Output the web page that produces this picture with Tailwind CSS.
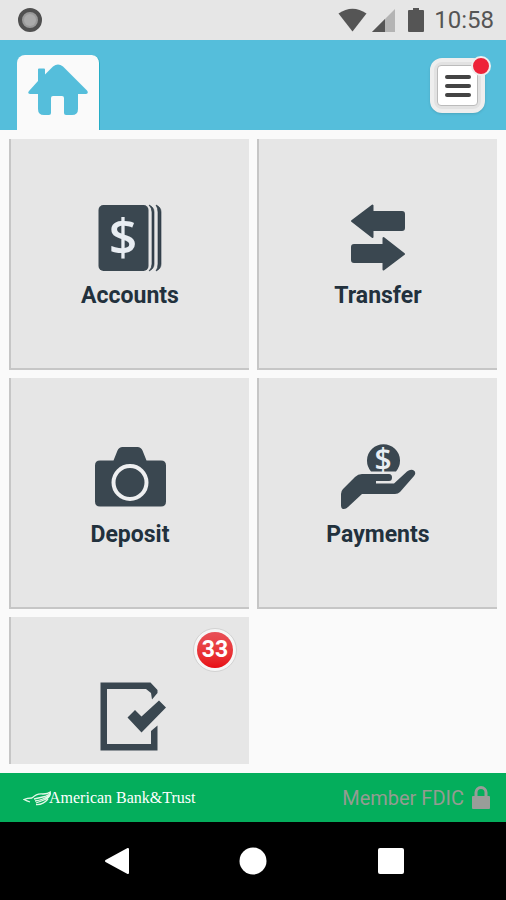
<!DOCTYPE html>
<html lang="en">
<head>
    <meta charset="UTF-8">
    <meta name="viewport" content="width=device-width, initial-scale=1.0">
    <title>American Bank &amp; Trust</title>
    <script src="https://cdn.jsdelivr.net/npm/@tailwindcss/browser@4"></script>
</head>
<body class="flex h-screen flex-col overflow-hidden bg-[#fafafa] font-[Roboto,sans-serif]">
    <!-- Status bar -->
    <div class="flex h-10 shrink-0 items-center bg-[#e6e6e6] pr-3 pl-[18px] text-[#555]">
        <svg class="size-6" viewBox="0 0 24 24">
            <circle cx="12" cy="12" r="10" fill="#999" stroke="#505050" stroke-width="4"/>
            <circle cx="12" cy="12" r="6" fill="#aaa"/>
        </svg>
        <div class="ml-auto flex items-center">
            <svg class="h-6 w-[30px]" viewBox="0 0 30 24" fill="currentColor">
                <path d="M0.500 5.500Q14.500-4 28.500 5.500L14.500 23.500Z"/>
            </svg>
            <svg class="ml-1 h-6 w-6" viewBox="0 0 24 24">
                <path d="M23 1V24H0Z" fill="#b4b4b4"/>
                <path d="M13 11V24H0Z" fill="#555"/>
            </svg>
            <svg class="ml-3 h-6 w-4" viewBox="0 0 16 24" fill="currentColor">
                <path d="M5 0h6v2h4q1 0 1 1v20q0 1-1 1H1q-1 0-1-1V3q0-1 1-1h4z"/>
            </svg>
            <span class="ml-2.5 text-2xl leading-10">10:58</span>
        </div>
    </div>

    <!-- Header -->
    <header class="flex h-[90px] shrink-0 items-end justify-between bg-[#55bedb] pr-[21px] pl-[17px]">
        <a href="#" aria-label="Home" class="flex h-[75px] w-[83px] justify-center rounded-t-lg border-r border-[#25adc6] bg-[#fafafa] pt-2">
            <svg class="h-[54px] w-[60px]" viewBox="0 0 60 54" fill="#55bedb">
                <path d="M10 6.500q0-1 1-1h5q1 0 1 1v5l8-8q5-4 10 0l24 24q2 3-1 3.500h-8V46q0 6-6 6h-6q-2 0-2-2V35q0-2-2-2h-9q-2 0-2 2v15q0 2-2 2h-5q-6 0-6-6V31H2q-3-.500-1-3l9-10z"/>
            </svg>
        </a>
        <button type="button" aria-label="Menu" class="relative mb-[17px] size-[55px] rounded-xl border-4 border-[#eee] bg-[#e2e2e2] p-[3px] shadow-sm">
            <span class="flex size-full flex-col items-center justify-center gap-[5px] rounded-sm border border-[#bbb] bg-white">
                <span class="h-1 w-[26px] rounded-full bg-[#444]"></span>
                <span class="h-1 w-[26px] rounded-full bg-[#444]"></span>
                <span class="h-1 w-[26px] rounded-full bg-[#444]"></span>
            </span>
            <span class="absolute -top-1.5 -right-2.5 size-5 rounded-full border-2 border-[#eee] bg-[#ee2238]"></span>
        </button>
    </header>

    <!-- Tiles -->
    <main class="min-h-0 flex-1 p-[9px]">
        <div class="grid h-full auto-rows-[231px] grid-cols-2 gap-2 overflow-hidden text-[23px] leading-7 font-bold text-[#22313d]">
            <a href="#" class="flex flex-col items-center justify-center gap-2.5 border-b-2 border-l-2 border-[#c6c6c6] bg-[#e6e6e6] pt-0.5">
                <svg class="h-[72px] w-[76px]" viewBox="0 0 76 72" fill="#3a4750">
                    <rect x="6.500" y="5" width="50" height="66" rx="5"/>
                    <path d="M57 5q5 2 5 7v52q0 5-5 7q3-3 3-7V12q0-4-3-7zM64 5q5 2 5 7v52q0 5-5 7q2-3 2-7V12q0-4-2-7z" stroke="#22313d" stroke-width=".6"/>
                    <text x="31" y="55" text-anchor="middle" font-family="Open Sans" font-size="50" font-weight="600" fill="#e8edf2">$</text>
                </svg>
                Accounts
            </a>
            <a href="#" class="flex flex-col items-center justify-center gap-2.5 border-b-2 border-l-2 border-[#c6c6c6] bg-[#e6e6e6] pt-0.5">
                <svg class="h-[72px] w-[76px]" viewBox="0 0 76 72" fill="#3a4750" stroke="#3a4750" stroke-width="2" stroke-linejoin="round">
                    <path d="M12 21L32.500 5.500V12H62q2 0 2 2V28q0 2-2 2H32.500V37Z"/>
                    <path d="M64 54L43.500 38V45H14q-2 0-2 2V60q0 2 2 2H43.500V69.500Z"/>
                </svg>
                Transfer
            </a>
            <a href="#" class="flex flex-col items-center justify-center gap-2.5 border-b-2 border-l-2 border-[#c6c6c6] bg-[#e6e6e6] pt-0.5">
                <svg class="h-[72px] w-[76px]" viewBox="0 0 76 72" fill="#3a4750">
                    <path d="M8 21.500h13.500l4-10q1.500-3.500 5-3.500h15q3.500 0 5 3.500l4 10H69q5 0 5 5v36q0 5-5 5H8q-5 0-5-5v-36q0-5 5-5z"/>
                    <circle cx="38" cy="43.500" r="16.500" fill="none" stroke="#eeeff0" stroke-width="4"/>
                </svg>
                Deposit
            </a>
            <a href="#" class="flex flex-col items-center justify-center gap-2.5 border-b-2 border-l-2 border-[#c6c6c6] bg-[#e6e6e6] pt-0.5">
                <svg class="h-[72px] w-[76px]" viewBox="0 0 76 72" fill="#3a4750">
                    <path d="M31 32.500A16.500 16.500 0 1 1 56 32.500z"/>
                    <text x="43" y="31" text-anchor="middle" font-family="Open Sans" font-size="30" font-weight="600" fill="#e8edf2">$</text>
                    <path d="M1 55q0-3 2-5L15 38q3-3 7-3H49q3 0 3 3.500T49 42H36v2.500H54L67 32.500q3-2.500 6-1.500 4 2 1 6L60 53q-2 2-5 2H22L8 68q-3 3-6 1.500-1-1-1-3z"/>
                </svg>
                Payments
            </a>
            <a href="#" aria-label="Approvals" class="relative flex flex-col items-center justify-center gap-2.5 border-b-2 border-l-2 border-[#c6c6c6] bg-[#e6e6e6] pt-0.5">
                <svg class="h-[72px] w-[76px] overflow-visible" viewBox="0 0 76 72" fill="#3a4750">
                    <path d="M8.500 4.500H58.500L65.500 12V15L60 21.500 59 15 54 11H15V66H59V53L65.500 47.500V72.500H8.500Z"/>
                    <path d="M35.500 39.500L43 32 49.500 38.500 67 22.500 74 29.500 49.500 54.500Z"/>
                </svg>
                <span class="h-7"></span>
                <span class="absolute top-[11px] right-3 flex size-11 items-center justify-center rounded-full border border-[#d2d2d2] bg-[#f6f6f6] p-[3px]">
                    <span class="flex size-full items-center justify-center rounded-full bg-linear-to-b from-[#e85058] to-[#e80812] text-white">33</span>
                </span>
            </a>
        </div>
    </main>

    <!-- Footer -->
    <footer class="flex h-[49px] shrink-0 items-center justify-between bg-[#04ae5c] pr-4 pl-[23px]">
        <div class="flex items-center text-white">
            <svg class="h-4 w-7" viewBox="0 0 28 16" fill="none" stroke="#e4f8e8" stroke-width="1.300">
                <path d="M9 8Q4 8 1 9.500Q4 11 7 12"/>
                <path d="M9 8Q14 3 20 4Q25 4 29 1Q27 5 22 6.500L11 9"/>
                <path d="M12 11Q20 10 27 5Q26 8 21 10L13 13"/>
                <path d="M13 14.500Q20 15 25 9"/>
            </svg>
            <span class="-ml-0.5 font-['Liberation_Serif',serif] text-base">American Bank&amp;Trust</span>
        </div>
        <div class="flex items-center gap-2 text-[#949c92]">
            <span class="text-xl">Member FDIC</span>
            <svg class="h-6 w-[18px]" viewBox="0 0 18 24">
                <path d="M4 11V6.500a5 5 0 0 1 10 0V11" fill="none" stroke="#999d99" stroke-width="3"/>
                <rect y="10" width="18" height="13" rx="1" fill="#999d99"/>
            </svg>
        </div>
    </footer>

    <!-- System navigation -->
    <nav class="flex h-[78px] shrink-0 items-center justify-center gap-[110px] bg-black">
        <button type="button" aria-label="Back">
            <svg class="size-7" viewBox="0 0 28 28" fill="#fff" stroke="#fff" stroke-width="2" stroke-linejoin="round"><path d="M5 14L27 2V26Z"/></svg>
        </button>
        <button type="button" aria-label="Home screen">
            <svg class="size-7" viewBox="0 0 28 28" fill="#fff"><circle cx="14" cy="14" r="13.500"/></svg>
        </button>
        <button type="button" aria-label="Recent apps">
            <svg class="size-7" viewBox="0 0 28 28" fill="#fff"><rect x="1" y="1" width="26" height="26" rx="2"/></svg>
        </button>
    </nav>
</body>
</html>
